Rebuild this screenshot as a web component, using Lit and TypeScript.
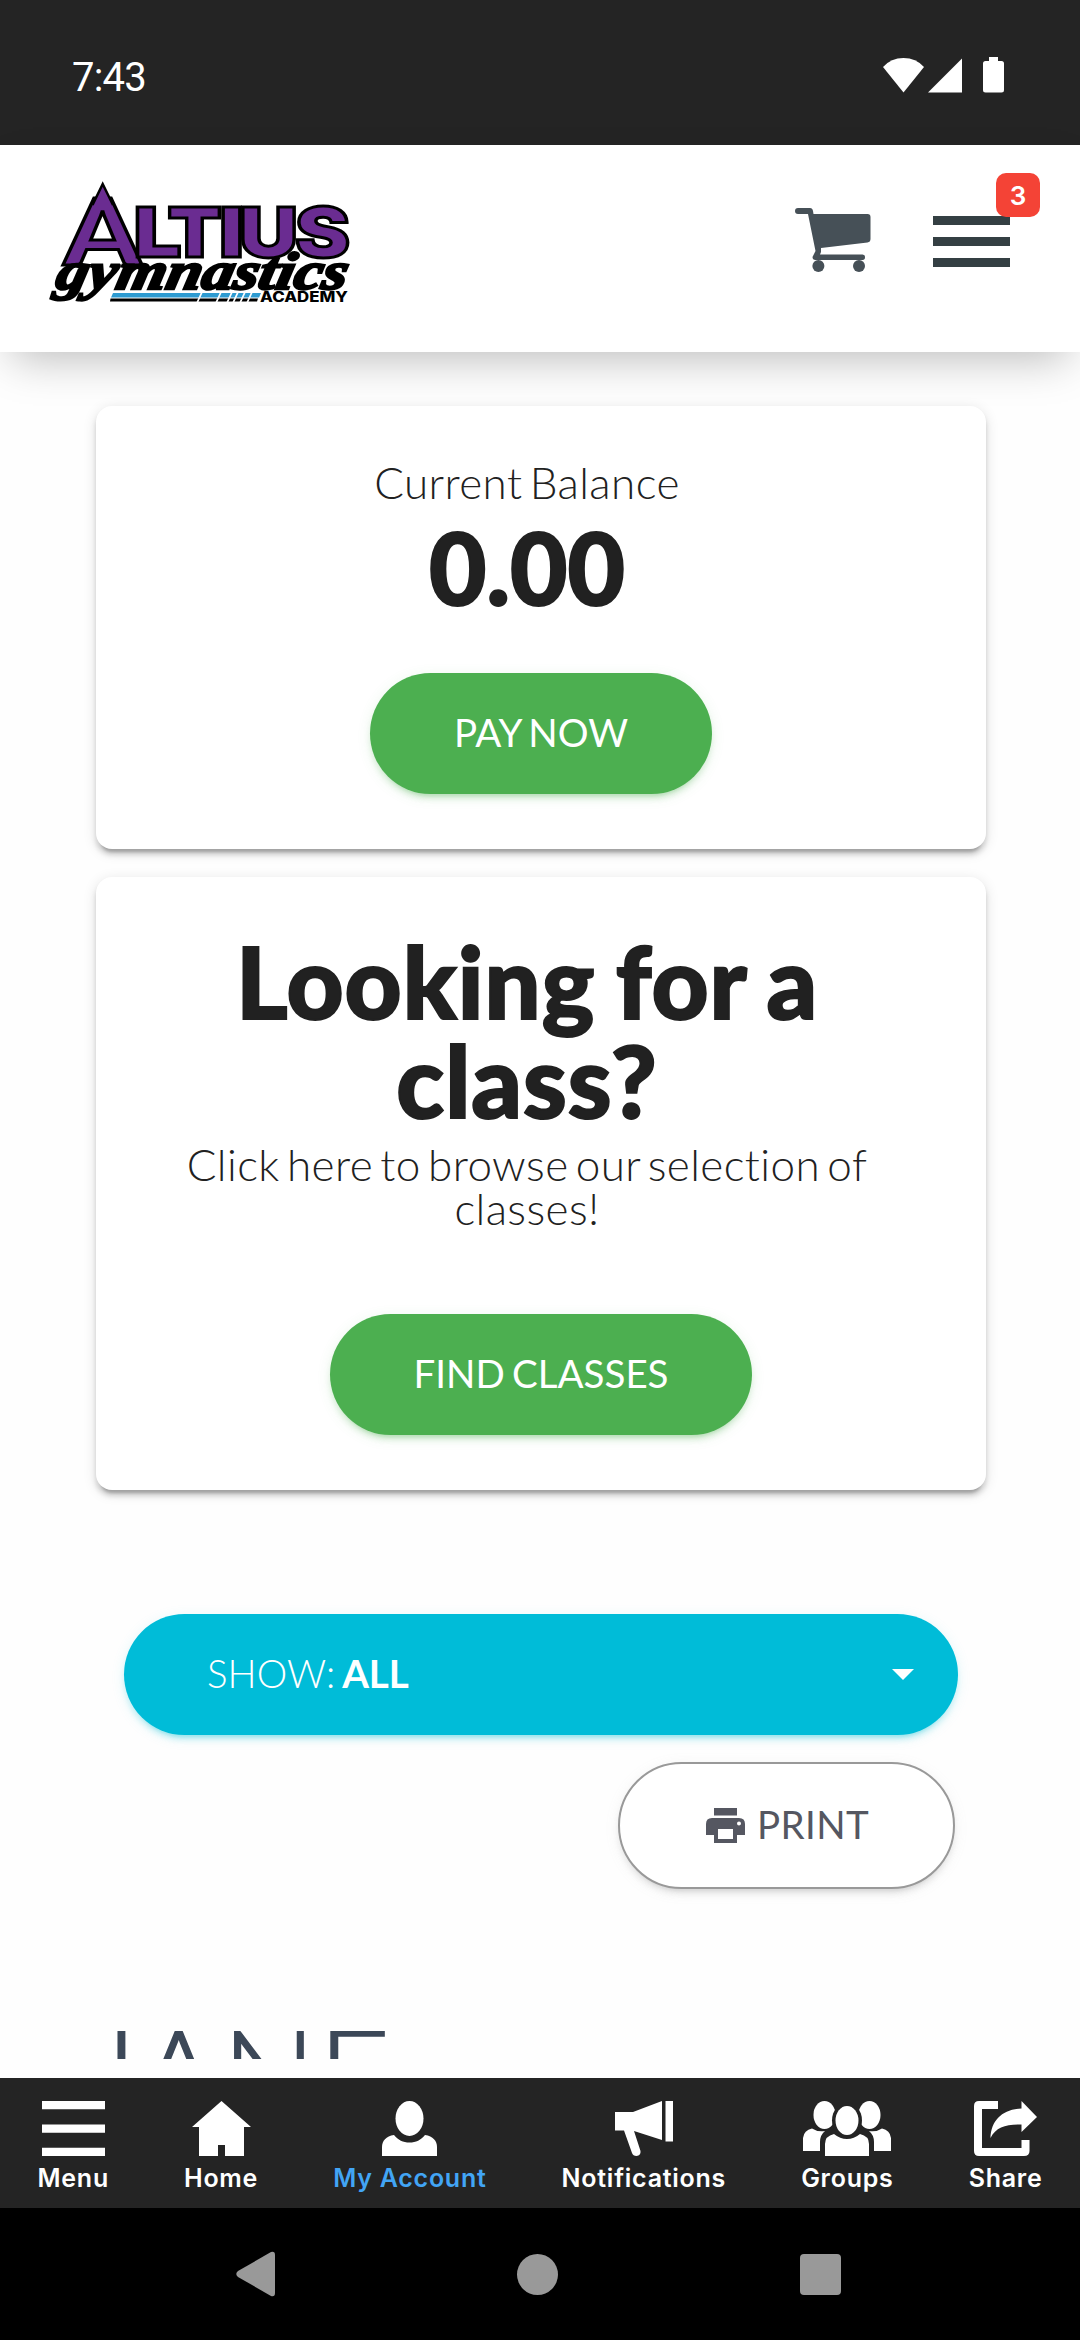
import { LitElement, html, css, svg } from 'lit';
import { customElement, property } from 'lit/decorators.js';
import { classMap } from 'lit/directives/class-map.js';

const TABS = [
  {
    label: 'Menu',
    width: 63,
    icon: svg`<path d="M0 0h63v8.3H0zM0 23.4h63v8.3H0zM0 46.7h63v8.3H0z"/>`
  },
  {
    label: 'Home',
    width: 59,
    icon: svg`<path d="M29.5 0L59 26H52V55H33V44H26V55H7V26H0z"/>`
  },
  {
    label: 'My Account',
    width: 55,
    active: true,
    icon: svg`
      <ellipse cx="27.5" cy="17.5" rx="14" ry="17.5"/>
      <path d="M0 55V46C0 40 4 35 12 34C16 39 21 41.500 27.500 41.500S39 39 43 34C51 35 55 40 55 46V55z"/>
    `
  },
  {
    label: 'Notifications',
    width: 58,
    icon: svg`
      <path d="M0 11H18L47 0V39L19 30L25.500 50Q26 54.500 21.500 55Q18 55 17 52L9 29.500H0z"/>
      <path d="M50.500 0H58V40.500H50.500z"/>
    `
  },
  {
    label: 'Groups',
    width: 88,
    icon: svg`
      <ellipse cx="21.500" cy="14" rx="11" ry="14"/>
      <ellipse cx="66.500" cy="14" rx="11" ry="14"/>
      <path d="M0 50V37Q1 29 9 27.500Q14 31 22 30Q17 34 17 41V50z"/>
      <path d="M88 50V37Q87 29 79 27.500Q74 31 66 30Q71 34 71 41V50z"/>
      <ellipse class="cut" cx="44" cy="19.500" rx="15" ry="18"/>
      <ellipse cx="44" cy="19.500" rx="11.500" ry="14.500"/>
      <path d="M22 55V43Q22 35 31 33Q37 38 44 38T57 33Q66 35 66 43V55z"/>
    `
  },
  {
    label: 'Share',
    width: 63,
    icon: svg`
      <path d="M24 0H5Q0 0 0 5V50Q0 55 5 55H50Q55.500 55 55.500 50V39H47.500V47H8V8H24z"/>
      <path d="M47.500 0L63 16L47.500 31V23.500C32 23 22 26 16.500 37C17 19 29 8 47.500 7.500z"/>
    `
  }
];

// letter, left edge, drawn width
const LOGO_LETTERS: [string, number, number][] = [
  ['L', 133.5, 48],
  ['T', 167.5, 54],
  ['I', 219, 25],
  ['U', 239, 59],
  ['S', 295, 55]
];

@customElement('club-logo')
export class ClubLogo extends LitElement {
  static styles = css`
    :host {
      display: block;
      width: 306px;
      height: 126px;
    }

    svg {
      overflow: visible;
    }

    .name {
      font-family: Inter, sans-serif;
      font-weight: 900;
      font-size: 69px;
      fill: #6a2c91;
      stroke: #000;
      stroke-width: 3px;
    }

    .name--initial {
      font-family: Lato, sans-serif;
      font-size: 92px;
    }

    .script {
      font-family: 'Liberation Serif', serif;
      font-weight: 700;
      font-style: italic;
      font-size: 53px;
      stroke: #000;
      stroke-width: 2.5px;
    }

    .academy {
      font-family: Inter, sans-serif;
      font-weight: 800;
      font-size: 14px;
    }
  `;

  render() {
    return html`
      <svg width="306" height="126" viewBox="46 180 306 126">
        <text class="name name--initial" x="64" y="265" textLength="77" lengthAdjust="spacingAndGlyphs">A</text>
        <path fill="#6a2c91" stroke="#000" stroke-width="2.5" d="M92.500 205L102.700 184L113 205"/>
        ${LOGO_LETTERS.map(([letter, x, width]) => svg`
          <text class="name" x=${x} y="257" textLength=${width} lengthAdjust="spacingAndGlyphs">${letter}</text>
        `)}
        <g transform="translate(0 289) skewX(-12)">
          <text class="script" x="54" y="0" textLength="291" lengthAdjust="spacingAndGlyphs">gymnastics</text>
        </g>
        <path fill="#2e9bd1" d="M113 293H261L259 297.500H111z"/>
        <path d="M110.500 298.500H258L257 301.500H110z"/>
        <path stroke="#fff" stroke-width="1.800" d="M202 292L197 303M221 292L216 303M232 292L227 303M238 292L233 303M245 292L240 303M252 292L247 303"/>
        <text class="academy" x="260" y="302" textLength="88" lengthAdjust="spacingAndGlyphs">ACADEMY</text>
      </svg>
    `;
  }
}

@customElement('info-card')
export class InfoCard extends LitElement {
  @property() action = '';

  static styles = css`
    :host {
      display: flex;
      flex-direction: column;
      align-items: center;
      box-sizing: border-box;
      padding: 54px 0 55px;
      border-radius: 16px;
      background: #fff;
      box-shadow:
        0 5.5px 5.5px 0 rgba(0, 0, 0, 0.14),
        0 8px 3px -5.5px rgba(0, 0, 0, 0.2),
        0 3px 14px 0 rgba(0, 0, 0, 0.12);
    }

    .text {
      display: flex;
      flex-direction: column;
      gap: 13px;
      flex: 1;
      width: 700px;
      margin-right: 28px;
      text-align: center;
    }

    .button {
      height: 121px;
      padding: 0 83.5px 4px;
      border: none;
      border-radius: 61px;
      background: #4caf50;
      color: #fff;
      font-family: Lato, sans-serif;
      font-size: 38.5px;
      word-spacing: -2.5px;
      box-shadow:
        0 5.5px 5.5px 0 rgba(76, 175, 80, 0.14),
        0 8px 3px -5.5px rgba(76, 175, 80, 0.2),
        0 3px 14px 0 rgba(76, 175, 80, 0.12);
    }
  `;

  render() {
    return html`
      <div class="text"><slot></slot></div>
      <button class="button">${this.action}</button>
    `;
  }
}

@customElement('app-root')
export class AppRoot extends LitElement {
  static styles = css`
    :host {
      display: flex;
      flex-direction: column;
      width: 1080px;
      height: 2340px;
      overflow: hidden;
      background: #fefefe;
      font-family: Lato, sans-serif;
      color: #212121;
    }

    svg {
      display: block;
    }

    /* Status bar */
    .status {
      display: flex;
      align-items: center;
      justify-content: space-between;
      box-sizing: border-box;
      height: 145px;
      padding: 5px 76px 0 72px;
      background: #242424;
      color: #fff;
      font-family: Roboto, sans-serif;
      font-size: 40px;
      flex: none;
    }

    .time {
      padding-top: 5px;
      letter-spacing: -0.8px;
    }

    /* Header */
    .header {
      display: flex;
      align-items: flex-start;
      box-sizing: border-box;
      height: 207px;
      padding: 35px 70px 0 46px;
      background: #fff;
      box-shadow: 0 18px 42px -12px rgba(0, 0, 0, 0.27);
      flex: none;
      z-index: 1;
    }

    .cart {
      margin: 28px 62px 0 auto;
    }

    .menu {
      position: relative;
      display: flex;
      flex-direction: column;
      gap: 12px;
      width: 77px;
      margin-top: 36px;
    }

    .menu-bar {
      height: 9px;
      background: #343f43;
    }

    .badge {
      position: absolute;
      top: -43px;
      right: -30px;
      width: 44px;
      height: 44px;
      border-radius: 10px;
      background: #f44336;
      color: #fff;
      font-family: Inter, sans-serif;
      font-size: 26px;
      font-weight: 600;
      line-height: 45px;
      text-align: center;
    }

    /* Page content */
    .content {
      display: flex;
      flex-direction: column;
      box-sizing: border-box;
      height: 1726px;
      padding: 54px 94px 0 96px;
      overflow: hidden;
      flex: none;
    }

    .balance {
      height: 443px;
    }

    .classes {
      height: 613px;
      margin-top: 28px;
    }

    .lead {
      font-size: 44px;
      font-weight: 300;
      line-height: 44px;
      letter-spacing: 0.4px;
      word-spacing: -5px;
    }

    .big {
      font-size: 99px;
      font-weight: 900;
      line-height: 99px;
      -webkit-text-stroke: 2px #212121;
    }

    .big--title {
      letter-spacing: 1px;
      word-spacing: -4px;
    }

    .show {
      display: flex;
      align-items: center;
      box-sizing: border-box;
      height: 121px;
      margin: 124px 28px 0;
      padding: 0 44px 0 83px;
      border-radius: 61px;
      background: #00bcd8;
      color: #fff;
      font-size: 38.5px;
      font-weight: 300;
      white-space: pre;
      word-spacing: -3.5px;
      box-shadow:
        0 5.5px 5.5px 0 rgba(0, 188, 212, 0.14),
        0 8px 3px -5.5px rgba(0, 188, 212, 0.2),
        0 3px 14px 0 rgba(0, 188, 212, 0.12);
    }

    .show-label,
    .print-label {
      padding-bottom: 3px;
    }

    .show-value {
      font-weight: 700;
    }

    .caret {
      margin-left: auto;
    }

    .print {
      display: flex;
      align-items: center;
      align-self: flex-end;
      box-sizing: border-box;
      width: 337px;
      height: 127px;
      margin: 27px 31px 0 0;
      padding: 0 0 0 86px;
      gap: 12px;
      border: 2px solid #999;
      border-radius: 64px;
      background: #fff;
      color: #555761;
      font-size: 38.5px;
      letter-spacing: 0.4px;
      box-shadow:
        0 5.5px 5.5px 0 rgba(153, 153, 153, 0.14),
        0 8px 3px -5.5px rgba(153, 153, 153, 0.2),
        0 3px 14px 0 rgba(153, 153, 153, 0.12);
    }

    .student {
      height: 28px;
      margin: 142px 0 0 -11px;
      overflow: hidden;
      color: #3c4858;
      font-size: 125px;
      font-weight: 300;
      line-height: 81px;
      letter-spacing: 2px;
      -webkit-text-stroke: 1.5px #3c4858;
    }

    /* Tab bar */
    .tabs {
      display: flex;
      justify-content: space-around;
      box-sizing: border-box;
      height: 130px;
      padding-top: 23px;
      background: #242424;
      flex: none;
    }

    .tab {
      display: flex;
      flex-direction: column;
      align-items: center;
      gap: 6px;
      color: #fff;
      font-family: Inter, sans-serif;
      font-size: 25px;
      font-weight: 600;
      line-height: 32px;
      letter-spacing: 0.75px;
    }

    .tab--active {
      color: #42a5f5;
    }

    .tab-icon {
      fill: #fff;
    }

    .cut {
      fill: #242424;
    }

    /* System navigation */
    .system {
      display: flex;
      align-items: center;
      justify-content: space-between;
      height: 132px;
      padding: 0 239px 0 236px;
      background: #000;
      fill: #999;
      flex: none;
    }
  `;

  render() {
    return html`
      <div class="status">
        <span class="time">7:43</span>
        <svg width="121" height="36" viewBox="0 0 121 36" fill="#fff">
          <path d="M0 10Q8 1 20.500 1T41 10L20.500 35.500z"/>
          <path d="M45 35.500L79 1.500V35.500z"/>
          <path d="M106 0H115V4H118.500Q121 4 121 6.500V33Q121 35.500 118.500 35.500H102.500Q100 35.500 100 33V6.500Q100 4 102.500 4H106z"/>
        </svg>
      </div>

      <div class="header">
        <club-logo></club-logo>
        <svg class="cart" width="76" height="64" viewBox="0 0 76 64" fill="#465057">
          <path d="M3 0H15Q17.500 0 18 3L18.500 6H72.500Q75.500 6 75.500 9V31Q75.500 34 72.500 34.500L26 40L26 44L25 46.500H67.500Q70 46.500 70 49.300T67.500 52H20.500Q17.500 52 17.500 49L20.500 43L13 6H3Q0 6 0 3T3 0z"/>
          <circle cx="23.400" cy="58" r="6"/>
          <circle cx="64" cy="58" r="6"/>
        </svg>
        <div class="menu">
          <div class="menu-bar"></div>
          <div class="menu-bar"></div>
          <div class="menu-bar"></div>
          <div class="badge">3</div>
        </div>
      </div>

      <div class="content">
        <info-card class="balance" action="PAY NOW">
          <div class="lead">Current Balance</div>
          <div class="big">0.00</div>
        </info-card>

        <info-card class="classes" action="FIND CLASSES">
          <div class="big big--title">Looking for a class?</div>
          <div class="lead">Click here to browse our selection of classes!</div>
        </info-card>

        <div class="show">
          <span class="show-label">SHOW: <span class="show-value">ALL</span></span>
          <svg class="caret" width="22" height="11" viewBox="0 0 22 11" fill="#fff">
            <path d="M0 0H22L11 11z"/>
          </svg>
        </div>

        <div class="print">
          <svg width="39" height="35" viewBox="0 0 39 35" fill="currentColor">
            <path fill-rule="evenodd" d="M8 0H31V7.500H8zM6 10H33Q39 10 39 16V27H31V35H8V27H0V16Q0 10 6 10zM12 21V31H27V21zM33 13.500A2 2 0 1 0 33 17.500A2 2 0 1 0 33 13.500z"/>
          </svg>
          <span class="print-label">PRINT</span>
        </div>

        <div class="student">JANE</div>
      </div>

      <div class="tabs">
        ${TABS.map(tab => html`
          <div class=${classMap({ tab: true, 'tab--active': !!tab.active })}>
            <svg class="tab-icon" width=${tab.width} height="55" viewBox="0 0 ${tab.width} 55">${tab.icon}</svg>
            <span>${tab.label}</span>
          </div>
        `)}
      </div>

      <div class="system">
        <svg width="39" height="46" viewBox="0 0 39 46">
          <path d="M2 20L35 1Q39 0 39 4V42Q39 46 35 45L2 26Q-1.500 23 2 20z"/>
        </svg>
        <svg width="41" height="41" viewBox="0 0 41 41"><circle cx="20.500" cy="20.500" r="20.500"/></svg>
        <svg width="41" height="41" viewBox="0 0 41 41"><rect width="41" height="41" rx="4"/></svg>
      </div>
    `;
  }
}
